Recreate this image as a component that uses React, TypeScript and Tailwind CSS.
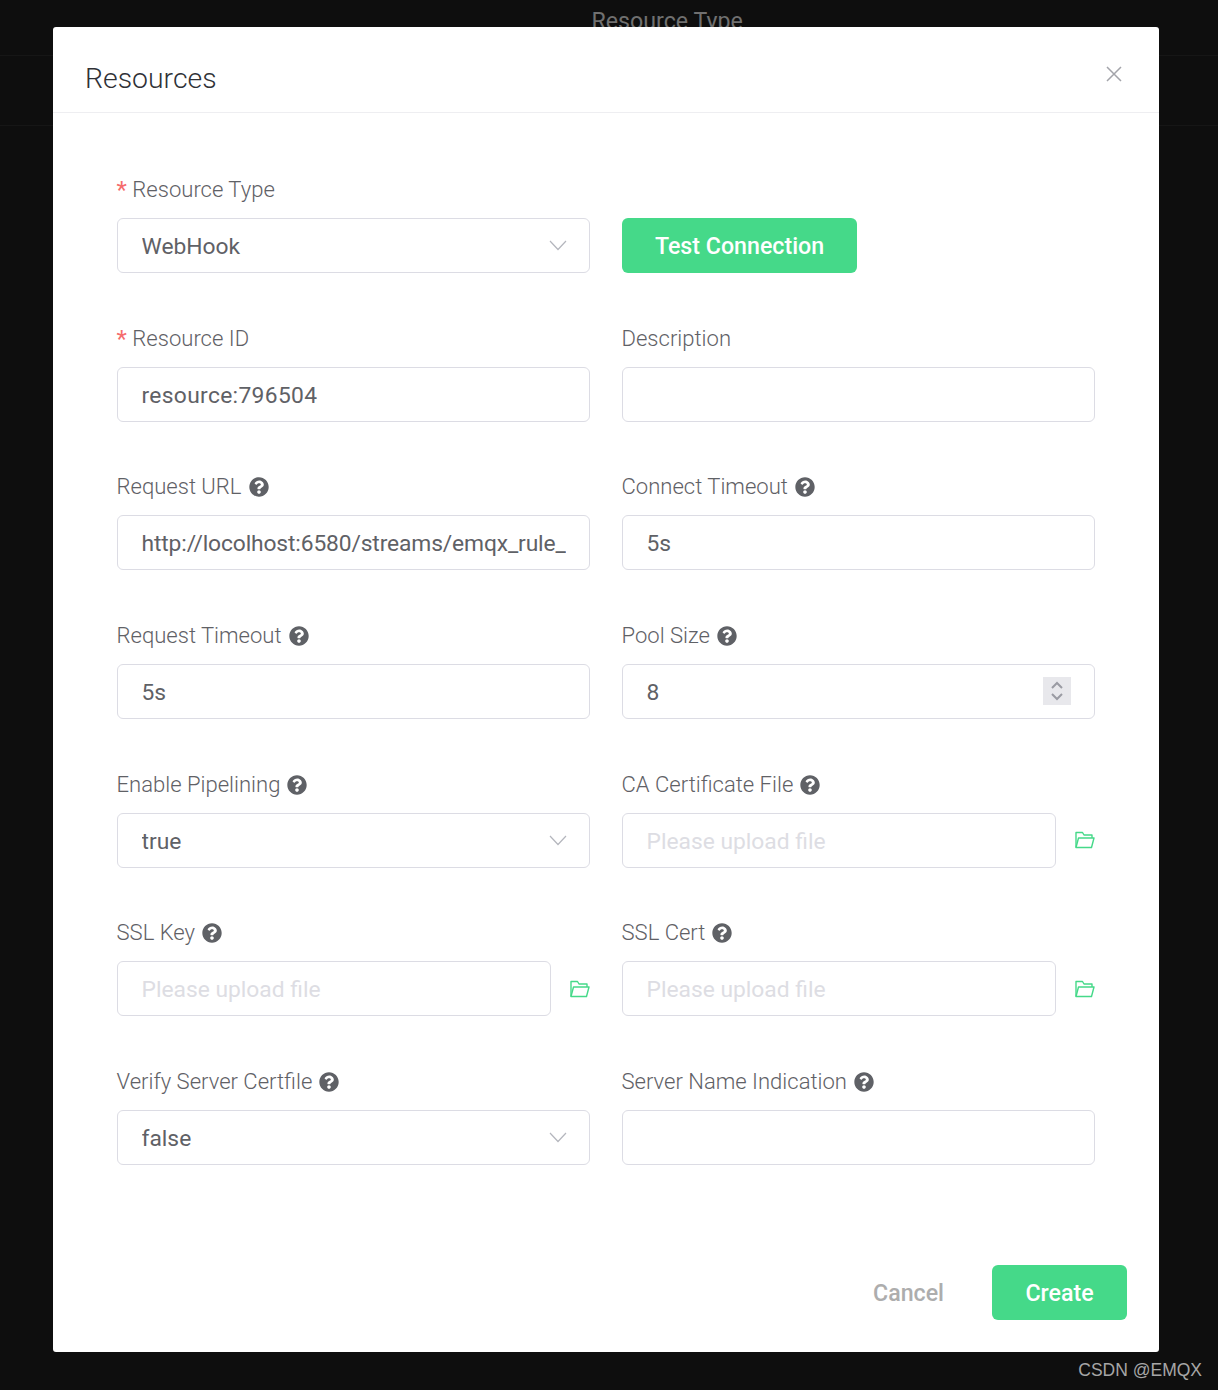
import React from "react";
import { FaQuestionCircle } from "react-icons/fa";

const roboto = "font-['Roboto',sans-serif]";

function Help() {
  return <FaQuestionCircle className="ml-[7px] w-[20px] h-[20px] text-[#5f6166]" />;
}

function Label({ text, required, help }: { text: string; required?: boolean; help?: boolean }) {
  return (
    <div className="h-[53px] pb-[16px] flex items-end">
      <div className="flex items-center h-[24px] -ml-[0.5px] text-[22.05px] font-light text-[#5f6166] leading-none">
        {required && <span className="text-[#f56c6c] mr-[5.5px] text-[24px] font-normal">*</span>}
        <span>{text}</span>
        {help && <Help />}
      </div>
    </div>
  );
}

function Box({ value, placeholder, select, stepper, textClass = "" }: { value?: string; placeholder?: string; select?: boolean; stepper?: boolean; textClass?: string }) {
  return (
    <div className="h-[55px] flex-1 min-w-0 border border-[#dcdce4] rounded-[6px] bg-white flex items-center pl-[23.5px] pr-[23px] relative">
      <span className={`flex-1 min-w-0 overflow-hidden whitespace-nowrap pt-[3px] text-[22.8px] ${value ? "text-[#5f6166]" : "text-[#dddde3]"} ${textClass}`}>
        {value ?? placeholder ?? "\u00a0"}
      </span>
      {select && (
        <svg width="18" height="11" viewBox="0 0 18 11" className="shrink-0 -mr-[1px]" fill="none" stroke="#b4b6bd" strokeWidth="1.2">
          <path d="M1 1l8 8.5L17 1" />
        </svg>
      )}
      {stepper && (
        <div className="shrink-0 w-[28px] h-[28px] -mt-[1px] bg-[#e8e8ec] flex items-center justify-center">
          <svg width="14" height="22" viewBox="0 0 14 22" fill="none" stroke="#9a9ba3" strokeWidth="2">
            <path d="M2 8l5-5 5 5M2 14l5 5 5-5" />
          </svg>
        </div>
      )}
    </div>
  );
}

function Folder() {
  return (
    <svg width="20" height="18" viewBox="0 0 20 18" fill="none" stroke="#45d989" strokeWidth="1.4" className="ml-[19px] shrink-0" strokeLinejoin="round">
      <path d="M1 16.5V1.5h6.5l1.5 2.5h8v3" />
      <path d="M1 16.5h15.5L19 7H3.5L1 16.5z" />
    </svg>
  );
}

function Field({ label, required, help, folder, ...rest }: { label?: string; required?: boolean; help?: boolean; folder?: boolean; value?: string; placeholder?: string; select?: boolean; stepper?: boolean; textClass?: string }) {
  return (
    <div className="flex flex-col">
      {label ? <Label text={label} required={required} help={help} /> : <div className="h-[53px]" />}
      <div className="flex items-center">
        <Box {...rest} />
        {folder && <Folder />}
      </div>
    </div>
  );
}

export default function App() {
  return (
    <div className={`relative w-[1218px] h-[1390px] bg-[#0e0e0e] overflow-hidden ${roboto}`}>
      <div className="h-[56px] border-b border-[#161616] flex justify-start pl-[591.5px] pt-[4px]">
        <span className="text-[23.2px] text-[#707070] font-normal">Resource Type</span>
      </div>
      <div className="h-[70px] border-b border-[#161616]" />

      <div className="absolute left-[53px] top-[27px] w-[1106px] h-[1325px] bg-white rounded-[3px] flex flex-col">
        <div className="h-[86px] shrink-0 border-b border-[#eeeef1] pl-[32px] pr-[36px] flex items-center justify-between">
          <span className="text-[28.4px] font-light text-[#2f3136] pt-[20px]">Resources</span>
          <svg width="18" height="18" viewBox="0 0 18 18" fill="none" stroke="#a3a4aa" strokeWidth="1.5" className="mt-[8px]">
            <path d="M2 2l14 14M16 2L2 16" />
          </svg>
        </div>

        <div className="pl-[64px] pr-[64px] pt-[52px] grid grid-cols-2 gap-x-[32px] gap-y-[40.67px] flex-1 content-start auto-rows-[108px]">
          <Field label="Resource Type" required value="WebHook" select />
          <div className="flex flex-col">
            <div className="h-[53px]" />
            <button className="w-[235px] h-[55px] pt-[2px] rounded-[6px] bg-[#45d989] text-white text-[23.2px] font-medium">Test Connection</button>
          </div>
          <Field label="Resource ID" required value="resource:796504" textClass="tracking-[0.33px]" />
          <Field label="Description" />
          <Field label="Request URL" help value="http://locolhost:6580/streams/emqx_rule_" textClass="tracking-[-0.13px]" />
          <Field label="Connect Timeout" help value="5s" />
          <Field label="Request Timeout" help value="5s" />
          <Field label="Pool Size" help value="8" stepper />
          <Field label="Enable Pipelining" help value="true" select />
          <Field label="CA Certificate File" help placeholder="Please upload file" folder />
          <Field label="SSL Key" help placeholder="Please upload file" folder />
          <Field label="SSL Cert" help placeholder="Please upload file" folder />
          <Field label="Verify Server Certfile" help value="false" select />
          <Field label="Server Name Indication" help />
        </div>

        <div className="shrink-0 h-[87px] pr-[32px] flex items-start justify-end">
          <button className="text-[23.2px] font-medium text-[#adadad] h-[55px] pt-[2px] mr-[48px]">Cancel</button>
          <button className="w-[135px] h-[55px] pt-[2px] rounded-[6px] bg-[#45d989] text-white text-[23.2px] font-medium">Create</button>
        </div>
      </div>

      <div className="absolute right-[16px] bottom-[11px] text-[17.5px] text-[#a6a6a6] font-['Liberation_Sans',sans-serif] leading-none">CSDN @EMQX</div>
    </div>
  );
}
